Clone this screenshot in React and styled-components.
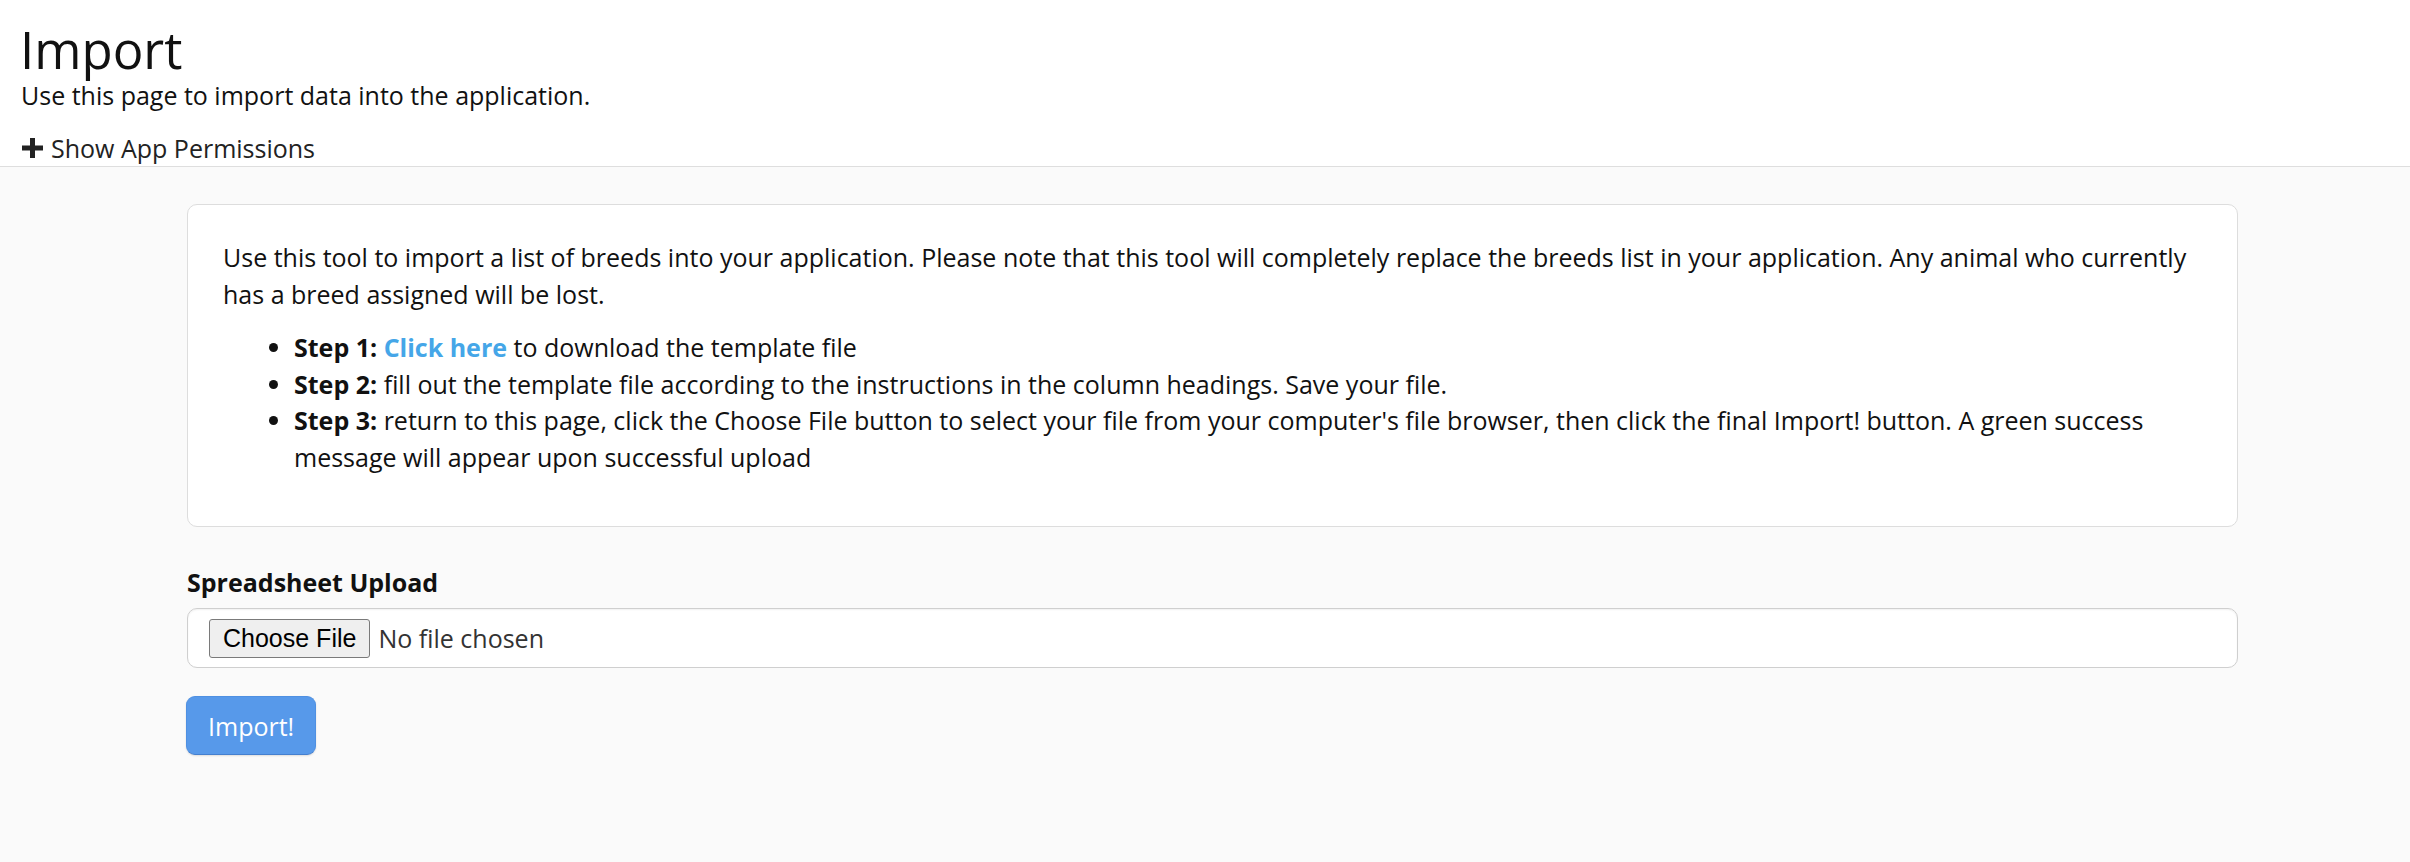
import React from "react";
import styled, { createGlobalStyle } from "styled-components";

const Global = createGlobalStyle`
  html, body { margin: 0; padding: 0; }
  body {
    background: #fafafa;
    font-family: "Open Sans", "Noto Sans", sans-serif;
    color: #111;
    font-size: 25px;
    line-height: 36px;
  }
`;

const Page = styled.div`
  min-height: 100vh;
  background: #fafafa;
`;

const Header = styled.header`
  background: #fff;
  border-bottom: 1px solid #dedede;
  padding: 21px 20px 0 20px;
  height: 167px;
  box-sizing: border-box;
`;

const Title = styled.h1`
  margin: 0;
  font-size: 51px;
  line-height: 56px;
  font-weight: 400;
  color: #111;
`;

const Subtitle = styled.p`
  margin: 0 0 17px 1px;
  font-size: 25px;
  line-height: 36px;
`;

const Toggle = styled.a`
  display: flex;
  align-items: center;
  gap: 8px;
  margin-left: 2px;
  font-size: 25px;
  line-height: 36px;
  color: #222;
  cursor: pointer;
  text-decoration: none;
`;

const Main = styled.main`
  padding: 37px 172px 40px 187px;
`;

const Card = styled.section`
  background: #fff;
  border: 1px solid #dddddd;
  border-radius: 10px;
  padding: 34px 16px 34px 35px;
  line-height: 36.5px;
`;

const Paragraph = styled.p`
  margin: 0 0 17px 0;
`;

const Steps = styled.ul`
  margin: 0 0 17px 0;
  padding-left: 71px;
  list-style: disc;
`;

const Step = styled.li`
  margin: 0;
`;

const Strong = styled.strong`
  font-weight: 700;
`;

const Link = styled.a`
  color: #45a6e8;
  font-weight: 700;
  text-decoration: none;
`;

const Label = styled.label`
  display: block;
  margin-top: 37px;
  font-weight: 700;
  font-size: 25px;
  line-height: 36px;
`;

const FileField = styled.div`
  margin-top: 8px;
  height: 60px;
  box-sizing: border-box;
  background: #fff;
  border: 1px solid #cfcfcf;
  border-radius: 10px;
  box-shadow: inset 0 1px 2px rgba(0, 0, 0, 0.06);
  display: flex;
  align-items: center;
  gap: 8px;
  padding-left: 21px;
`;

const ChooseButton = styled.span`
  display: inline-flex;
  align-items: center;
  justify-content: center;
  height: 39px;
  box-sizing: border-box;
  padding: 0 13px;
  background: #efefef;
  border: 1px solid #7a7a7a;
  border-radius: 3px;
  font-family: "Liberation Sans", Arial, sans-serif;
  font-size: 25px;
  color: #000;
`;

const FileStatus = styled.span`
  color: #333;
  font-size: 25px;
`;

const ImportButton = styled.button`
  display: block;
  margin: 28px 0 0 -1px;
  height: 59px;
  padding: 0 21px;
  background: #5799ea;
  border: 1px solid #4f90e2;
  border-bottom-color: #447fcf;
  border-radius: 9px;
  box-shadow: 0 1px 2px rgba(0, 0, 0, 0.12);
  color: #fff;
  font-family: "Open Sans", sans-serif;
  font-size: 25px;
  line-height: 36px;
  cursor: pointer;
`;

const PlusIcon = () => (
  <svg width="21" height="20" viewBox="0 0 21 20" aria-hidden="true">
    <rect x="0" y="7.5" width="21" height="5" fill="#222" />
    <rect x="8" y="0" width="5" height="20" fill="#222" />
  </svg>
);

export default function App() {
  return (
    <Page>
      <Global />
      <Header>
        <Title>Import</Title>
        <Subtitle>Use this page to import data into the application.</Subtitle>
        <Toggle>
          <PlusIcon />
          <span>Show App Permissions</span>
        </Toggle>
      </Header>
      <Main>
        <Card>
          <Paragraph>
            Use this tool to import a list of breeds into your application. Please note that this tool will
            completely replace the breeds list in your application. Any animal who currently has a breed
            assigned will be lost.
          </Paragraph>
          <Steps>
            <Step>
              <Strong>Step 1:</Strong> <Link href="#">Click here</Link> to download the template file
            </Step>
            <Step>
              <Strong>Step 2:</Strong> fill out the template file according to the instructions in the column
              headings. Save your file.
            </Step>
            <Step>
              <Strong>Step 3:</Strong> return to this page, click the Choose File button to select your file from
              your computer's file browser, then click the final Import! button. A green success message will
              appear upon successful upload
            </Step>
          </Steps>
        </Card>
        <Label>Spreadsheet Upload</Label>
        <FileField>
          <ChooseButton>Choose File</ChooseButton>
          <FileStatus>No file chosen</FileStatus>
        </FileField>
        <ImportButton>Import!</ImportButton>
      </Main>
    </Page>
  );
}
